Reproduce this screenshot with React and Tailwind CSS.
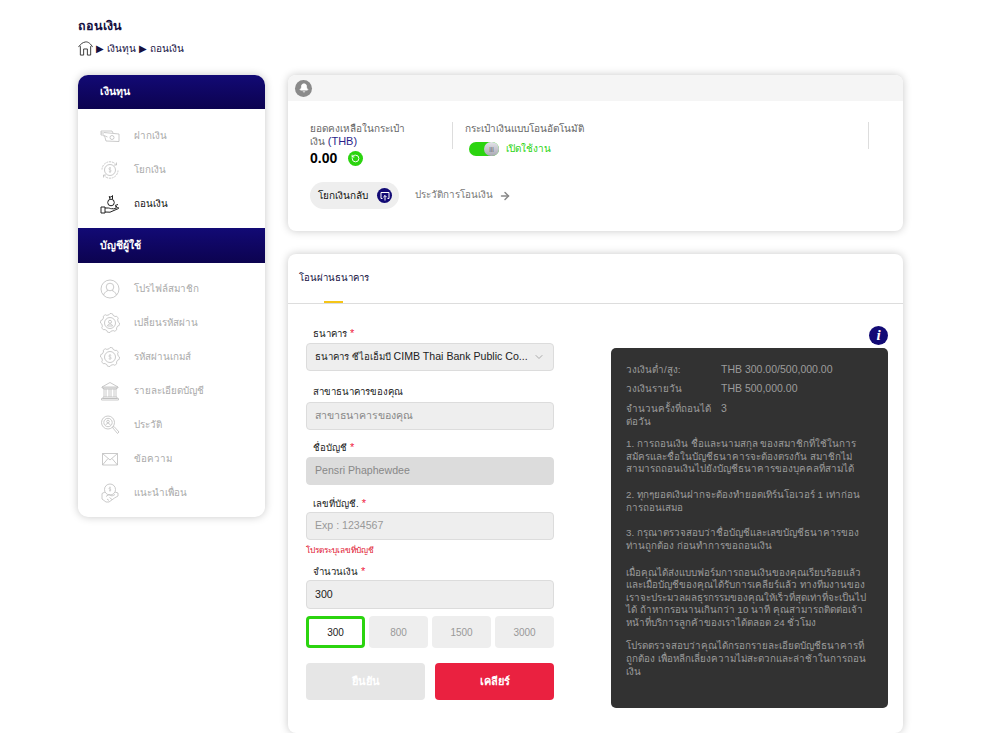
import React from "react";
import { Bell, RotateCcw, ArrowRight, ChevronDown } from "lucide-react";

// ฟันเฟืองของไอคอนรหัสผ่าน
function gearPath() {
  const pts = [];
  for (let i = 0; i < 48; i++) {
    const a = (i / 48) * Math.PI * 2;
    const r = 8.2 + (Math.floor(i / 3) % 2 === 0 ? 1.3 : 0);
    pts.push(`${(10 + r * Math.cos(a)).toFixed(2)} ${(10 + r * Math.sin(a)).toFixed(2)}`);
  }
  return `M${pts.join("L")}Z`;
}

const Svg = ({ children, className = "" }) => (
  <svg
    width="20"
    height="20"
    viewBox="0 0 20 20"
    fill="none"
    stroke="currentColor"
    strokeWidth="0.8"
    className={className}
  >
    {children}
  </svg>
);

const DepositIcon = (p) => (
  <Svg {...p}>
    <path d="M1 5h11l1 2M1 5v4h3M1 7h3" />
    <path d="M4 6.500 19 8v7.500L6 15l-1-3.500-1.500-2" />
    <circle cx="12" cy="11.500" r="2" />
    <path d="M4 9.500l3.500 1.500" />
  </Svg>
);
const TransferIcon = (p) => (
  <Svg {...p}>
    <circle cx="10" cy="10" r="5.500" />
    <path d="M11 8.300c-1-.8-2.200-.4-2.200.5 0 1.200 2.400.8 2.400 2.100 0 1-1.400 1.200-2.400.5M10 7v6" strokeWidth="0.6" />
    <path d="M2 9.500A8 8 0 0 1 16 4.500M18 10.500A8 8 0 0 1 4 15.500" strokeDasharray="2 .8" />
    <path d="M16.500 2.500v2.500H14M3.500 17.500V15H6" />
  </Svg>
);
const WithdrawIcon = (p) => (
  <Svg {...p}>
    <circle cx="11" cy="8.500" r="3.300" strokeWidth="1" />
    <path d="M10 5l-.8-2.500 1.800.7 1.500-1.700L12.500 5" strokeWidth="1" />
    <path d="M1 13h4v6H1z" strokeWidth="1" />
    <path d="M5 14h3.500c1 0 1.500.7 3 .7h2M5 18l5 .2 8.500-3.700c.5-.8-.3-1.300-1-1l-4 1.500" strokeWidth="1" />
    <path d="M15 11.500l3-1M15 13l2-.7" strokeWidth="1" />
  </Svg>
);
const ProfileIcon = (p) => (
  <Svg {...p}>
    <circle cx="10" cy="10" r="9" />
    <circle cx="10" cy="8" r="3.800" />
    <path d="M3.500 16c1-3 3.500-4.200 4.500-4.500M16.500 16c-1-3-3.500-4.200-4.500-4.500" />
  </Svg>
);
const PasswordIcon = (p) => (
  <Svg {...p}>
    <path d={gearPath()} />
    <circle cx="10" cy="10" r="5.500" />
    <circle cx="10" cy="8.800" r="1.500" />
    <path d="M7.500 13c.3-1.600 1.300-2 2.500-2s2.200.4 2.500 2z" />
  </Svg>
);
const GameIcon = (p) => (
  <Svg {...p}>
    <path d={gearPath()} />
    <circle cx="10" cy="10" r="5.500" />
    <path d="M11.300 8.500c-1-.9-2.500-.5-2.500.6 0 1.300 2.600.7 2.600 2 0 1-1.600 1.200-2.700.5M10 7.300v5.400" strokeWidth="0.6" />
  </Svg>
);
const BankIcon = (p) => (
  <Svg {...p}>
    <path d="M2 6 10 1.500 18 6zM2 6v1h16V6M3.500 7v1h13V7" />
    <path d="M4 8v8M6 8v8M9 8v8M11 8v8M14 8v8M16 8v8" />
    <path d="M3 16h14v1.500H3zM1.500 17.500h17V19h-17z" />
  </Svg>
);
const HistoryIcon = (p) => (
  <Svg {...p}>
    <circle cx="8" cy="7.500" r="6.500" />
    <circle cx="8" cy="7.500" r="4.200" />
    <circle cx="8" cy="6.500" r="1.300" />
    <path d="M5.800 10c.4-1.200 1.200-1.500 2.200-1.500s1.800.3 2.200 1.500" />
    <path d="M12.500 12.500 14 11.500l5 5.500-1.500 1.500z" />
  </Svg>
);
const MailIcon = (p) => (
  <Svg {...p}>
    <path d="M2.500 4.500h15v11.500h-15z" />
    <path d="M2.500 4.500 10 11l7.500-6.500M2.500 16 8 9.500M17.500 16 12 9.500" />
  </Svg>
);
const ReferIcon = (p) => (
  <Svg {...p}>
    <circle cx="10" cy="6.500" r="5.500" />
    <path d="M10.800 5c-.6-.6-1.800-.4-1.800.4 0 1 2 .6 2 1.600 0 .8-1.200 1-2 .4M10 3.500v5" strokeWidth="0.6" />
    <path d="M5 9 2 10.500V16l4 3h3l5.500-4L18 13v-3l-3-1" />
    <path d="M6 13.500l3-2 3 1.500 3-1.500M7 16l2 1.500M9.500 14.500l2.500 2" />
  </Svg>
);

const fundItems = [
  { label: "ฝากเงิน", icon: DepositIcon },
  { label: "โยกเงิน", icon: TransferIcon },
  { label: "ถอนเงิน", icon: WithdrawIcon, active: true },
];

const accountItems = [
  { label: "โปรไฟล์สมาชิก", icon: ProfileIcon },
  { label: "เปลี่ยนรหัสผ่าน", icon: PasswordIcon },
  { label: "รหัสผ่านเกมส์", icon: GameIcon },
  { label: "รายละเอียดบัญชี", icon: BankIcon },
  { label: "ประวัติ", icon: HistoryIcon },
  { label: "ข้อความ", icon: MailIcon },
  { label: "แนะนำเพื่อน", icon: ReferIcon },
];

function NavRow({ item }) {
  const Icon = item.icon;
  return (
    <div className="flex h-[34px] items-center pl-[22px]">
      <Icon className={item.active ? "text-[#222]" : "text-[#bdbdbd]"} />
      <span
        className={`ml-[14px] text-[9.8px] ${
          item.active ? "text-[#111]" : "text-[#aaa]"
        }`}
      >
        {item.label}
      </span>
    </div>
  );
}

function NavHead({ children, className = "h-[34px]" }) {
  return (
    <div
      className={`flex items-center bg-gradient-to-b from-[#120a75] to-[#0c0350] pl-[22px] text-[10.5px] font-bold text-white ${className}`}
    >
      {children}
    </div>
  );
}

function Label({ children, star }) {
  return (
    <div className="pl-[7px] text-[9.6px] leading-[16px] text-[#222]">
      {children}
      {star && <span className="text-[11px] text-[#f0203e]"> *</span>}
    </div>
  );
}

function Field({ children, className = "" }) {
  return (
    <div
      className={`flex h-[28px] items-center rounded-[4px] border border-[#dcdcdc] px-[8px] text-[10.6px] ${className}`}
    >
      {children}
    </div>
  );
}

function Para({ className = "mt-[12px]", children }) {
  return <p className={`whitespace-nowrap ${className}`}>{children}</p>;
}

export default function App() {
  return (
    <div className="h-[733px] overflow-hidden bg-white pl-[78px] pr-[103px] pt-[18px] font-['Liberation_Sans',sans-serif]">
      <h1 className="text-[12.5px] font-bold leading-[16px] text-[#15103f]">
        ถอนเงิน
      </h1>
      <div className="mt-[6px] flex h-[16px] items-center gap-[3px] text-[10px] text-[#15103f]">
        <svg width="15" height="15" viewBox="0 0 16 16" fill="none" stroke="#333" strokeWidth="1">
          <path d="M.5 6.500C3 3 5 1.500 8 1s6 2.500 7.500 5.500M2.500 5.500v9.500h3.500V8.500h4V15h3.500V5.500" />
        </svg>
        <span className="text-[10px]">▶</span>
        <span>เงินทุน</span>
        <span className="text-[10px]">▶</span>
        <span>ถอนเงิน</span>
      </div>

      <div className="mt-[19px] flex gap-[23px]">
        <aside className="h-[442px] w-[187px] shrink-0 self-start overflow-hidden rounded-[10px] bg-white shadow-[0_0_8px_rgba(0,0,0,0.22)]">
          <NavHead>เงินทุน</NavHead>
          <div className="pb-[7px] pt-[10px]">
            {fundItems.map((item) => (
              <NavRow key={item.label} item={item} />
            ))}
          </div>
          <NavHead className="h-[35px]">บัญชีผู้ใช้</NavHead>
          <div className="pt-[9px]">
            {accountItems.map((item) => (
              <NavRow key={item.label} item={item} />
            ))}
          </div>
        </aside>

        <main className="flex min-w-0 flex-1 flex-col gap-[23px]">
          {/* กระเป๋าเงิน */}
          <section className="h-[156px] overflow-hidden rounded-[8px] bg-white shadow-[0_0_8px_rgba(0,0,0,0.22)]">
            <div className="flex h-[26px] items-center bg-[#f5f5f5] pl-[7px]">
              <div className="flex h-[17px] w-[17px] items-center justify-center rounded-full bg-[#8a8a8a]">
                <Bell size={10} fill="white" className="text-white" />
              </div>
            </div>
            <div className="flex h-[72px] pl-[22px] pt-[21px]">
              <div className="w-[130px]">
                <div className="text-[10px] leading-[13px] text-[#666]">
                  ยอดคงเหลือในกระเป๋า
                  <br />
                  เงิน <span className="text-[11px] text-[#2b1f8a]">(THB)</span>
                </div>
                <div className="flex items-center gap-[11px]">
                  <span className="text-[14px] font-bold text-black">0.00</span>
                  <span className="flex h-[15px] w-[15px] items-center justify-center rounded-full bg-[#2bd40f]">
                    <RotateCcw size={9} strokeWidth={2.5} className="text-white" />
                  </span>
                </div>
              </div>
              <div className="ml-[12px] h-[27px] w-px bg-[#ddd]" />
              <div className="ml-[12px] w-[403px]">
                <div className="text-[10px] leading-[14px] text-[#666]">
                  กระเป๋าเงินแบบโอนอัตโนมัติ
                </div>
                <div className="mt-[5px] flex items-center pl-[4px]">
                  <div className="flex h-[14px] w-[30px] justify-end rounded-full bg-[#2bd40f]">
                    <div className="flex h-[14px] w-[15px] items-center justify-center rounded-full bg-gradient-to-b from-[#e4e4ea] to-[#a9a9b3] text-[6px] leading-none text-[#555]">
                      |||
                    </div>
                  </div>
                  <span className="ml-[7px] text-[10px] text-[#2bd40f]">เปิดใช้งาน</span>
                </div>
              </div>
              <div className="h-[27px] w-px bg-[#ddd]" />
            </div>
            <div className="mt-[9px] flex items-center pl-[22px]">
              <div className="flex h-[27px] w-[89px] items-center justify-between rounded-full bg-[#eeeeee] pl-[8px] pr-[7px] text-[10px] text-[#111]">
                โยกเงินกลับ
                <span className="flex h-[15px] w-[15px] items-center justify-center rounded-full bg-[#120a75]">
                  <svg width="10" height="10" viewBox="0 0 10 10" fill="none" stroke="white" strokeWidth="1">
                    <path d="M2.500 7.500H1V1.500h8v6H7.500M5 9.500V4.500M3.300 6.200 5 4.500l1.700 1.700" />
                  </svg>
                </span>
              </div>
              <span className="ml-[16px] text-[9.8px] text-[#777]">ประวัติการโอนเงิน</span>
              <ArrowRight size={12} strokeWidth={3} className="ml-[6px] text-[#888]" />
            </div>
          </section>

          {/* โอนผ่านธนาคาร */}
          <section className="h-[479px] rounded-[8px] bg-white shadow-[0_0_8px_rgba(0,0,0,0.22)]">
            <div className="relative h-[50px] border-b border-[#ddd] pl-[11px] pt-[17px] text-[9.6px] leading-[14px] text-[#15103f]">
              โอนผ่านธนาคาร
              <div className="absolute bottom-0 left-[36px] h-[2px] w-[19px] bg-[#f5c518]" />
            </div>
            <div className="flex pl-[18px] pt-[21px]">
              <div className="w-[248px] shrink-0">
                <Label star>ธนาคาร</Label>
                <Field className="mt-[1px] justify-between bg-[#eeeeee] text-[#222]">
                  <span className="truncate">
                    <span className="text-[9.6px]">ธนาคาร ซีไอเอ็มบี</span> CIMB Thai Bank Public Co...
                  </span>
                  <ChevronDown size={12} className="shrink-0 text-[#aaa]" />
                </Field>
                <div className="mt-[13px]">
                  <Label>สาขาธนาคารของคุณ</Label>
                </div>
                <Field className="mt-[2px] bg-[#eeeeee] text-[9.6px] text-[#888]">สาขาธนาคารของคุณ</Field>
                <div className="mt-[9px]">
                  <Label star>ชื่อบัญชี</Label>
                </div>
                <Field className="mt-[1px] border-[#dcdcdc] bg-[#dcdcdc] text-[#888]">Pensri Phaphewdee</Field>
                <div className="mt-[10px]">
                  <Label star>เลขที่บัญชี.</Label>
                </div>
                <Field className="bg-[#eeeeee] text-[#999]">Exp : 1234567</Field>
                <div className="mt-[3px] text-[8.3px] leading-[14px] text-[#e0102c]">
                  โปรดระบุเลขที่บัญชี
                </div>
                <div className="mt-[6px]">
                  <Label star>จำนวนเงิน</Label>
                </div>
                <Field className="h-[29px] bg-[#eeeeee] text-[#222]">300</Field>
                <div className="mt-[7px] grid grid-cols-4 gap-[4px] text-[10px]">
                  <div className="flex h-[32px] items-center justify-center rounded-[4px] border-[3px] border-[#2bd40f] bg-white text-[#222]">
                    300
                  </div>
                  {["800", "1500", "3000"].map((v) => (
                    <div
                      key={v}
                      className="flex h-[32px] items-center justify-center rounded-[4px] bg-[#eeeeee] text-[#999]"
                    >
                      {v}
                    </div>
                  ))}
                </div>
                <div className="mt-[15px] flex justify-between text-[11px] font-bold text-white">
                  <div className="flex h-[37px] w-[119px] items-center justify-center rounded-[4px] bg-[#e6e6e6]">
                    ยืนยัน
                  </div>
                  <div className="flex h-[37px] w-[119px] items-center justify-center rounded-[4px] bg-[#ea2140]">
                    เคลียร์
                  </div>
                </div>
              </div>

              <div className="ml-[57px] mt-[1px] w-[277px] shrink-0">
                <div className="flex h-[22px] justify-end">
                  <span className="flex h-[19px] w-[19px] items-center justify-center rounded-full bg-[#120a75] font-['Liberation_Serif',serif] text-[15px] font-bold italic text-white">
                    i
                  </span>
                </div>
                <div className="h-[360px] rounded-[5px] bg-[#323232] px-[15px] pt-[15px] text-[9.8px] leading-[13px] text-[#9c9c9c]">
                  <div className="flex">
                    <span className="w-[95px] shrink-0">วงเงินต่ำ/สูง:</span>
                    <span className="text-[10.5px]">THB 300.00/500,000.00</span>
                  </div>
                  <div className="mt-[6px] flex">
                    <span className="w-[95px] shrink-0">วงเงินรายวัน</span>
                    <span className="text-[10.5px]">THB 500,000.00</span>
                  </div>
                  <div className="mt-[7px] flex">
                    <span className="w-[95px] shrink-0">
                      จำนวนครั้งที่ถอนได้
                      <br />
                      ต่อวัน
                    </span>
                    <span className="text-[10.5px]">3</span>
                  </div>
                  <Para className="mt-[10px] leading-[12.5px]">
                    1. การถอนเงิน ชื่อและนามสกุล ของสมาชิกที่ใช้ในการ
                    <br />
                    สมัครและชื่อในบัญชีธนาคารจะต้องตรงกัน สมาชิกไม่
                    <br />
                    สามารถถอนเงินไปยังบัญชีธนาคารของบุคคลที่สามได้
                  </Para>
                  <Para>
                    2. ทุกๆยอดเงินฝากจะต้องทำยอดเทิร์นโอเวอร์ 1 เท่าก่อน
                    <br />
                    การถอนเสมอ
                  </Para>
                  <Para>
                    3. กรุณาตรวจสอบว่าชื่อบัญชีและเลขบัญชีธนาคารของ
                    <br />
                    ท่านถูกต้อง ก่อนทำการขอถอนเงิน
                  </Para>
                  <Para className="mt-[15px] leading-[12.5px]">
                    เมื่อคุณได้ส่งแบบฟอร์มการถอนเงินของคุณเรียบร้อยแล้ว
                    <br />
                    และเมื่อบัญชีของคุณได้รับการเคลียร์แล้ว ทางทีมงานของ
                    <br />
                    เราจะประมวลผลธุรกรรมของคุณให้เร็วที่สุดเท่าที่จะเป็นไป
                    <br />
                    ได้ ถ้าหากรอนานเกินกว่า 10 นาที คุณสามารถติดต่อเจ้า
                    <br />
                    หน้าที่บริการลูกค้าของเราได้ตลอด 24 ชั่วโมง
                  </Para>
                  <Para className="mt-[10px]">
                    โปรดตรวจสอบว่าคุณได้กรอกรายละเอียดบัญชีธนาคารที่
                    <br />
                    ถูกต้อง เพื่อหลีกเลี่ยงความไม่สะดวกและล่าช้าในการถอน
                    <br />
                    เงิน
                  </Para>
                </div>
              </div>
            </div>
          </section>
        </main>
      </div>
    </div>
  );
}
